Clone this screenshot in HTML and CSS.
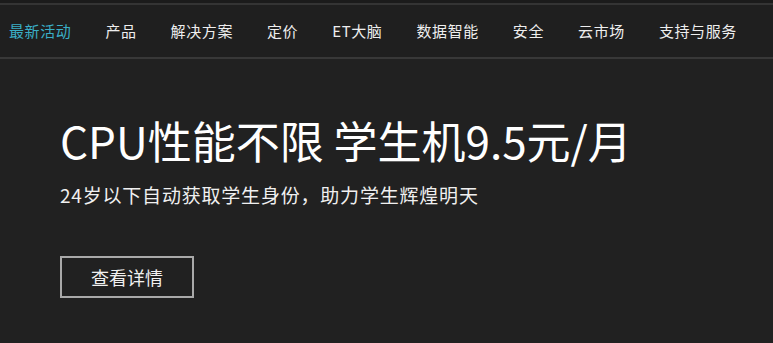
FILE: index.html
```html
<!DOCTYPE html>
<html lang="zh-CN">
<head>
<meta charset="utf-8">
<title>学生机</title>
<link rel="stylesheet" href="styles.css">
</head>
<body>
<div class="topstrip"></div>
<nav class="nav">
  <a class="nav-item active" href="#">最新活动</a>
  <a class="nav-item" href="#">产品</a>
  <a class="nav-item" href="#">解决方案</a>
  <a class="nav-item" href="#">定价</a>
  <a class="nav-item" href="#">ET大脑</a>
  <a class="nav-item" href="#">数据智能</a>
  <a class="nav-item" href="#">安全</a>
  <a class="nav-item" href="#">云市场</a>
  <a class="nav-item" href="#">支持与服务</a>
</nav>
<main class="hero">
  <h1 class="hero-title">CPU性能不限 学生机9.5元/月</h1>
  <p class="hero-sub">24岁以下自动获取学生身份，助力学生辉煌明天</p>
  <a class="hero-btn" href="#">查看详情</a>
</main>
</body>
</html>
```
FILE: styles.css
```css
html, body {
  margin: 0;
  padding: 0;
}
body {
  background: #212121;
  color: #f2f2f2;
  font-family: "Noto Sans CJK SC", "Noto Sans", sans-serif;
  width: 773px;
  height: 343px;
  overflow: hidden;
}
.topstrip {
  height: 3px;
  background: #1b1b1b;
}
.nav {
  display: flex;
  align-items: center;
  gap: 34px;
  height: 52px;
  padding-left: 9px;
  background: #1f1f1f;
  border-top: 2px solid #343434;
  border-bottom: 2px solid #383838;
}
.nav-item {
  color: #eeeeee;
  text-decoration: none;
  font-size: 15px;
  letter-spacing: 0.6px;
  line-height: 20px;
  white-space: nowrap;
}
.nav-item.active {
  color: #3aaec6;
}
.hero {
  padding-left: 60px;
  display: flex;
  flex-direction: column;
  align-items: flex-start;
}
.hero-title {
  margin: 55px 0 0;
  font-size: 44px;
  font-weight: 400;
  line-height: 52px;
  color: #ffffff;
  white-space: nowrap;
}
.hero-sub {
  margin: 16px 0 0;
  font-size: 19px;
  letter-spacing: 0.8px;
  line-height: 26px;
  color: #f0f0f0;
  white-space: nowrap;
}
.hero-btn {
  margin-top: 48px;
  box-sizing: border-box;
  width: 134px;
  height: 42px;
  border: 2px solid #a9a9a9;
  display: flex;
  align-items: center;
  justify-content: center;
  color: #f0f0f0;
  text-decoration: none;
  font-size: 18px;
}
```
